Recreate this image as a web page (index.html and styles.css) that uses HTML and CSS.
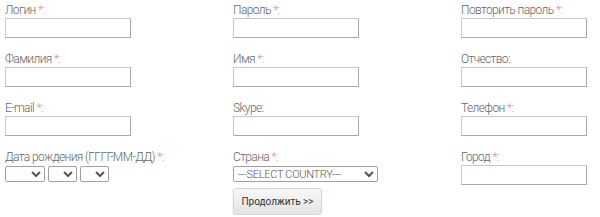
FILE: index.html
```html
<!DOCTYPE html>
<html lang="ru">
<head>
    <meta charset="UTF-8">
    <title>Регистрация</title>
    <link rel="stylesheet" href="styles.css">
</head>
<body>
    <form class="reg-form">
        <div class="field">
            <label>Логин <span class="req">*:</span></label>
            <input type="text" class="txt">
        </div>
        <div class="field">
            <label>Пароль <span class="req">*:</span></label>
            <input type="password" class="txt">
        </div>
        <div class="field">
            <label>Повторить пароль <span class="req">*:</span></label>
            <input type="password" class="txt">
        </div>

        <div class="field">
            <label>Фамилия <span class="req">*:</span></label>
            <input type="text" class="txt">
        </div>
        <div class="field">
            <label>Имя <span class="req">*:</span></label>
            <input type="text" class="txt">
        </div>
        <div class="field">
            <label>Отчество:</label>
            <input type="text" class="txt">
        </div>

        <div class="field">
            <label>E-mail <span class="req">*:</span></label>
            <input type="text" class="txt">
        </div>
        <div class="field">
            <label>Skype:</label>
            <input type="text" class="txt">
        </div>
        <div class="field">
            <label>Телефон <span class="req">*:</span></label>
            <input type="text" class="txt">
        </div>

        <div class="field">
            <label>Дата рождения (ГГГГ-ММ-ДД) <span class="req">*:</span></label>
            <div class="date-row">
                <select class="sel sel-year"><option></option></select>
                <select class="sel sel-small"><option></option></select>
                <select class="sel sel-small"><option></option></select>
            </div>
        </div>
        <div class="field">
            <label>Страна <span class="req">*:</span></label>
            <select class="sel sel-country"><option>---SELECT COUNTRY---</option></select>
            <button type="button" class="btn">Продолжить &gt;&gt;</button>
        </div>
        <div class="field">
            <label>Город <span class="req">*:</span></label>
            <input type="text" class="txt">
        </div>
    </form>
</body>
</html>
```

FILE: styles.css
```css
* {
    margin: 0;
    padding: 0;
    box-sizing: border-box;
}

body {
    font-family: Roboto, "Noto Sans", sans-serif;
    background: #fff;
    color: #777;
}

.reg-form {
    display: grid;
    grid-template-columns: 228px 228px 139px;
    align-items: start;
    row-gap: 14px;
    padding: 3px 0 0 5px;
}

.field label {
    display: block;
    font-size: 12px;
    line-height: 15px;
    letter-spacing: -0.6px;
    font-weight: 300;
    color: #666;
}

.req {
    color: #e0909a;
}

.txt {
    display: block;
    width: 126px;
    height: 20px;
    border: 1px solid #aaa;
    border-top-color: #c8c8c8;
    border-left-color: #c8c8c8;
    background: #fff;
}

.date-row {
    display: flex;
    gap: 3px;
    margin-top: 1px;
}

.sel {
    height: 16px;
    font-family: Roboto, sans-serif;
    font-size: 11px;
    color: #555;
    border: 1px solid #a0a0a0;
    border-radius: 2px;
    background: #fff;
}

.sel-year {
    width: 40px;
}

.sel-small {
    width: 29px;
}

.sel-country {
    display: block;
    width: 145px;
    margin-top: 1px;
    font-weight: 300;
    letter-spacing: -0.3px;
}

.btn {
    display: block;
    margin-top: 6px;
    width: 89px;
    height: 27px;
    font-family: Roboto, sans-serif;
    font-size: 10px;
    color: #333;
    border: 1px solid #d6d6d6;
    border-radius: 3px;
    background: linear-gradient(#f8f8f8, #e4e4e4);
    box-shadow: 0 1px 2px rgba(0,0,0,0.1);
}
```
